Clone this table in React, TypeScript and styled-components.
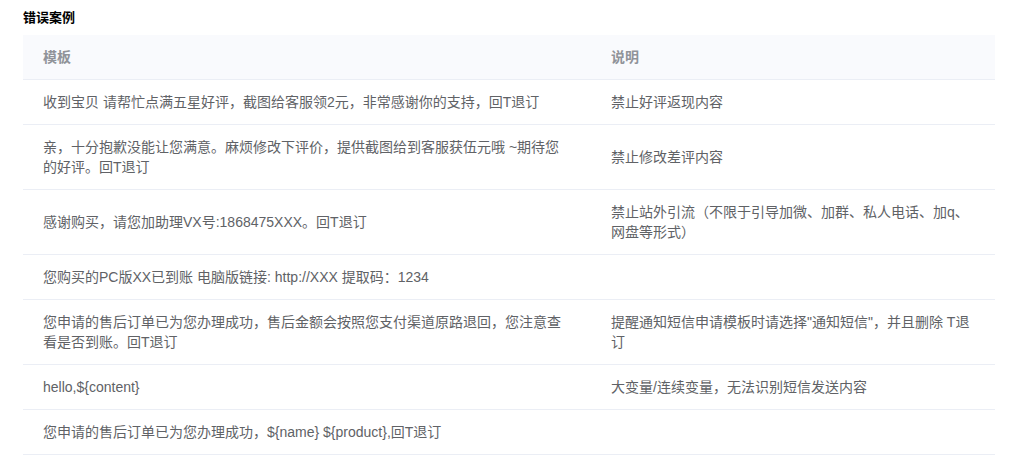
import React from "react";
import styled, { createGlobalStyle } from "styled-components";

const GlobalStyle = createGlobalStyle`
  html, body {
    margin: 0;
    padding: 0;
    background: #ffffff;
  }
  body {
    font-family: "Liberation Sans", "Noto Sans CJK SC", sans-serif;
  }
`;

const Page = styled.div`
  padding: 8px 22px 0 23px;
  width: 972px;
`;

const Title = styled.h3`
  margin: 0 0 7px 0;
  font-size: 13px;
  line-height: 20px;
  font-weight: 700;
  color: #000000;
`;

const Table = styled.table`
  width: 972px;
  border-collapse: collapse;
  table-layout: fixed;
  font-size: 14px;
`;

const HeadCell = styled.th<{ $w?: number }>`
  width: ${(p) => (p.$w ? `${p.$w}px` : "auto")};
  box-sizing: border-box;
  padding: 12px 20px;
  line-height: 20px;
  text-align: left;
  font-weight: 700;
  color: #909399;
  background: #f9fafd;
  border-bottom: 1px solid #ebeef5;
`;

const Cell = styled.td`
  padding: 12px 20px;
  line-height: 20px;
  color: #606266;
  vertical-align: middle;
  border-bottom: 1px solid #ebeef5;
  word-break: break-all;
`;

const rows: [string, string][] = [
  ["收到宝贝 请帮忙点满五星好评，截图给客服领2元，非常感谢你的支持，回T退订", "禁止好评返现内容"],
  ["亲，十分抱歉没能让您满意。麻烦修改下评价，提供截图给到客服获伍元哦 ~期待您的好评。回T退订", "禁止修改差评内容"],
  ["感谢购买，请您加助理VX号:1868475XXX。回T退订", "禁止站外引流（不限于引导加微、加群、私人电话、加q、网盘等形式）"],
  ["您购买的PC版XX已到账 电脑版链接: http://XXX 提取码：1234", ""],
  ["您申请的售后订单已为您办理成功，售后金额会按照您支付渠道原路退回，您注意查看是否到账。回T退订", "提醒通知短信申请模板时请选择\"通知短信\"，并且删除 T退订"],
  ["hello,${content}", "大变量/连续变量，无法识别短信发送内容"],
  ["您申请的售后订单已为您办理成功，${name} ${product},回T退订", ""],
];

export default function App() {
  return (
    <>
      <GlobalStyle />
      <Page>
        <Title>错误案例</Title>
        <Table>
          <thead>
            <tr>
              <HeadCell $w={568}>模板</HeadCell>
              <HeadCell>说明</HeadCell>
            </tr>
          </thead>
          <tbody>
            {rows.map(([tpl, desc], i) => (
              <tr key={i}>
                <Cell>{tpl}</Cell>
                <Cell>{desc || "\u00a0"}</Cell>
              </tr>
            ))}
          </tbody>
        </Table>
      </Page>
    </>
  );
}
